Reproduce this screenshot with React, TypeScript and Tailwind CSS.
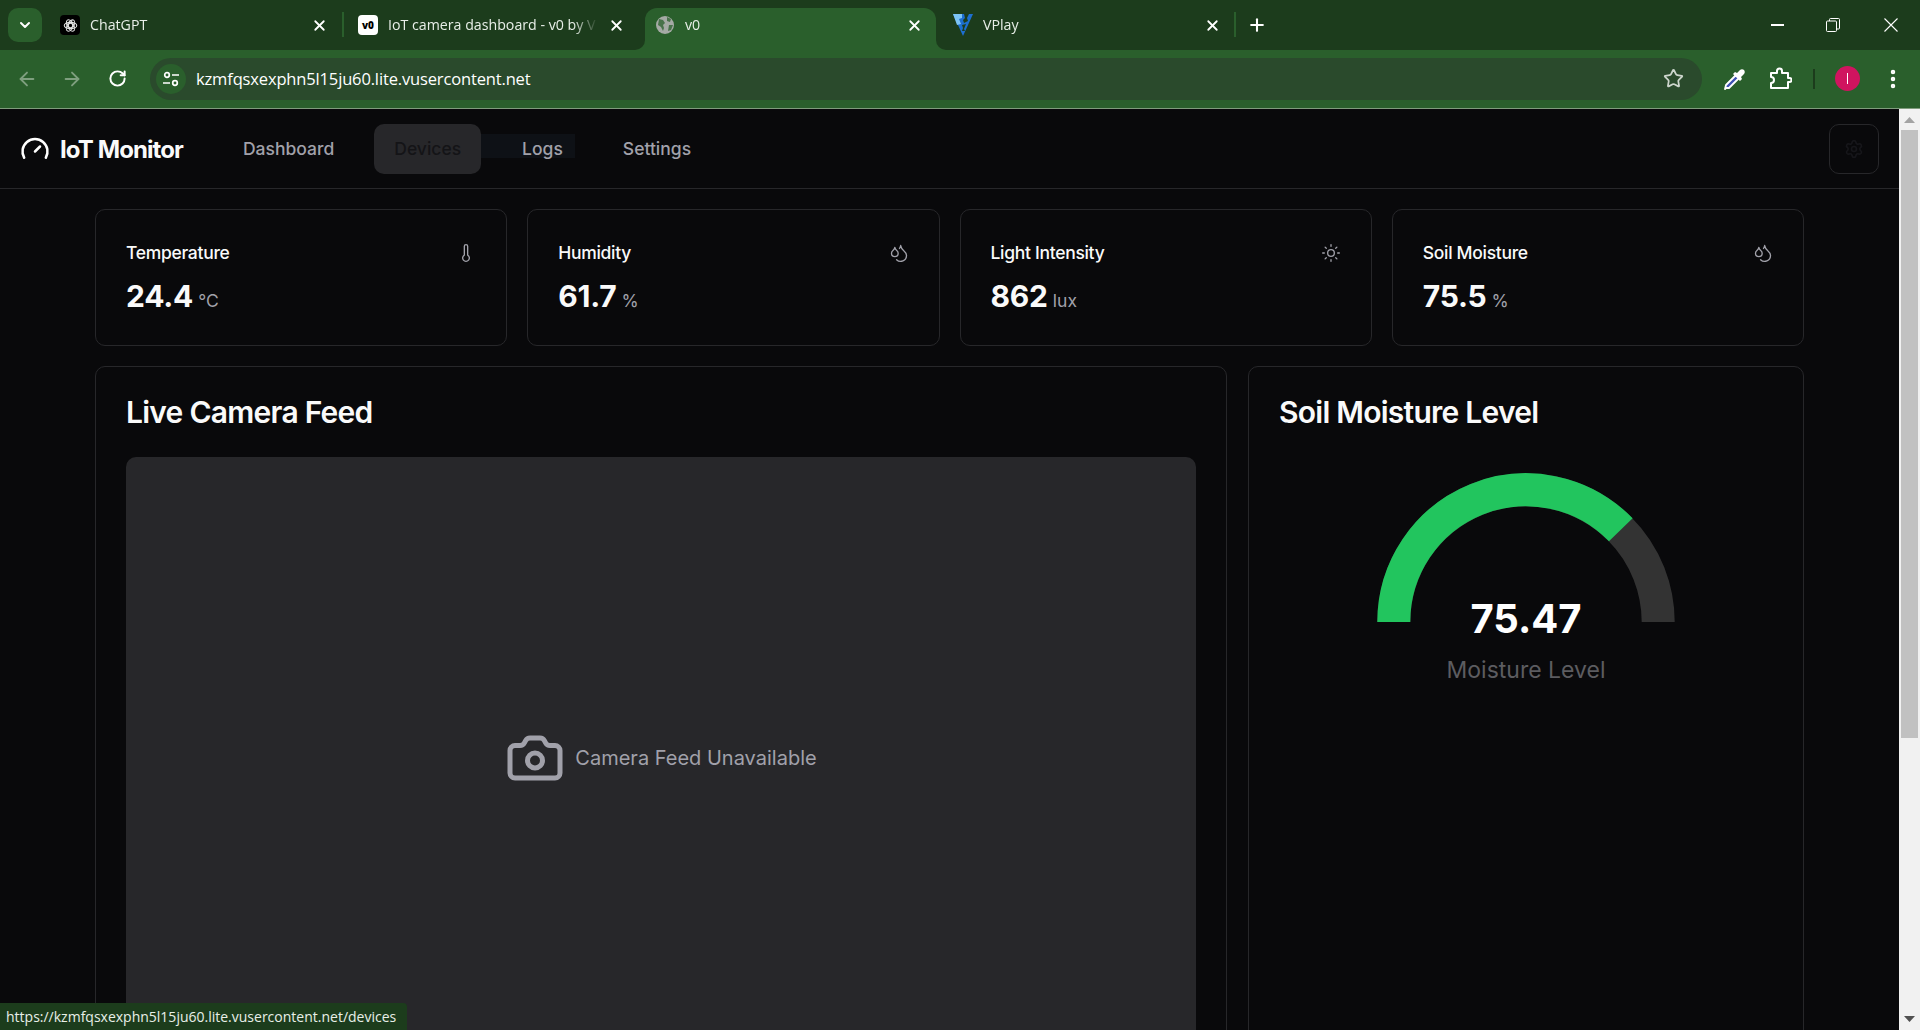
import { ArrowLeft, ArrowRight, Camera, ChevronDown, Droplets, EllipsisVertical, Gauge, Plus, RotateCw, Settings, Star, Sun, Thermometer, X } from "lucide-react";

const tabs = [
  { title: "ChatGPT", icon: "gpt", cls: "w-[296px] pl-3 pr-4" },
  { title: "IoT camera dashboard - v0 by V", icon: "v0", cls: "w-[301px] pl-[14px] pr-5" },
  { title: "v0", icon: "globe", cls: "w-[291px] pl-[10px] pr-[13px]", active: true },
  { title: "VPlay", icon: "vplay", cls: "w-[300px] pl-[17px] pr-[15px]" },
];

const stats = [
  { label: "Temperature", value: "24.4", unit: "°C", icon: Thermometer },
  { label: "Humidity", value: "61.7", unit: "%", icon: Droplets },
  { label: "Light Intensity", value: "862", unit: "lux", icon: Sun },
  { label: "Soil Moisture", value: "75.5", unit: "%", icon: Droplets },
];

function TabIcon({ kind }: { kind: string }) {
  if (kind === "gpt") {
    return (
      <span className="flex h-5 w-5 shrink-0 items-center justify-center rounded-[4px] bg-black">
        <svg width="15" height="15" viewBox="0 0 24 24" fill="none" stroke="#e5e5e5" strokeWidth="1.7">
          <circle cx="12" cy="12" r="3.5" />
          <ellipse cx="12" cy="12" rx="10" ry="5" />
          <ellipse cx="12" cy="12" rx="10" ry="5" transform="rotate(60 12 12)" />
          <ellipse cx="12" cy="12" rx="10" ry="5" transform="rotate(120 12 12)" />
        </svg>
      </span>
    );
  }
  if (kind === "v0") {
    return (
      <span className="flex h-5 w-5 shrink-0 items-center justify-center rounded-[4px] bg-white text-[10px] leading-none font-black text-black">
        v0
      </span>
    );
  }
  if (kind === "globe") {
    return (
      <svg className="shrink-0" width="20" height="20" viewBox="0 0 20 20">
        <circle cx="10" cy="10" r="9" fill="#a5aaa5" />
        <path d="M4 4l4 1 2 3-2 2 1 3-1 3-2-4-3-2zM12 2l4 2-1 3-3-1zM14 10l4 0-2 5-3 1z" fill="#2a5f2c" opacity="0.75" />
      </svg>
    );
  }
  return (
    <svg className="shrink-0" width="20" height="24" viewBox="0 0 20 24">
      <path d="M0 1l20 0-10 22z" fill="#1d6fd0" />
      <path d="M0 1l9 0 0 4-3 1 2 5-4 1z" fill="#7cc4f5" />
      <path d="M11 1l5 0-2 4 1 3-4 2-1-3 2-2z" fill="#1c3c1c" />
      <path d="M9 12l4-1-2 5 1 2-3 0 1-3z" fill="#1c3c1c" />
    </svg>
  );
}

function BrowserChrome() {
  return (
    <div className="shrink-0 font-['Open_Sans',sans-serif]">
      {/* Tab strip */}
      <div className="flex h-[50px] items-end bg-[#1c3c1c] text-white">
        <div className="mb-2 ml-2 flex h-[34px] w-[34px] items-center justify-center rounded-[10px] bg-[#2a5f2c]">
          <ChevronDown size={16} strokeWidth={3} />
        </div>
        <div className="ml-[6px] flex">
          {tabs.map((tab) => (
            <div
              key={tab.title}
              className={`relative flex h-[42px] items-center gap-[10px] rounded-t-[12px] pb-[8px] text-[14.2px] ${tab.cls} ${tab.active ? "bg-[#2a5f2c]" : ""}`}
            >
              <TabIcon kind={tab.icon} />
              <span className="min-w-0 flex-1 whitespace-nowrap text-[#e8efe8] [mask-image:linear-gradient(to_right,black_88%,transparent)]">
                {tab.title}
              </span>
              <X className="shrink-0" size={17} strokeWidth={2.5} />
              {tab.active && (
                <>
                  <span className="absolute bottom-0 -left-[10px] h-[10px] w-[10px] bg-[#2a5f2c]">
                    <span className="block h-full w-full rounded-br-[10px] bg-[#1c3c1c]" />
                  </span>
                  <span className="absolute -right-[10px] bottom-0 h-[10px] w-[10px] bg-[#2a5f2c]">
                    <span className="block h-full w-full rounded-bl-[10px] bg-[#1c3c1c]" />
                  </span>
                </>
              )}
              {(tab.icon === "gpt" || tab.icon === "vplay") && (
                <span className="absolute top-[4px] right-0 bottom-[13px] w-[2px] bg-[#2a5f2c]" />
              )}
            </div>
          ))}
        </div>
        <div className="mb-2 ml-[11px] flex h-[34px] items-center">
          <Plus size={20} strokeWidth={2.5} />
        </div>
        <div className="mb-[18px] ml-auto flex items-center gap-[42px] pr-[22px]">
          <span className="h-[1.5px] w-[13px] bg-white" />
          <svg width="14" height="14" viewBox="0 0 14 14" fill="none" stroke="white" strokeWidth="1">
            <rect x="0.5" y="3" width="10" height="10.5" rx="1" />
            <path d="M3.5 3V1.5a1 1 0 0 1 1-1h8a1 1 0 0 1 1 1V10a1 1 0 0 1-1 1h-2" />
          </svg>
          <svg className="ml-[2px]" width="14" height="14" viewBox="0 0 14 14" stroke="white" strokeWidth="1.1">
            <path d="M0.5 0.5l13 13M13.5 0.5l-13 13" />
          </svg>
        </div>
      </div>

      {/* Toolbar */}
      <div className="flex h-[59px] items-center border-b border-[#7f9c7c] bg-[#2a5f2c] pb-px text-[#dfe8df]">
        <ArrowLeft className="ml-[16px] text-[#7f9f7f]" size={22} strokeWidth={2} />
        <ArrowRight className="ml-[23px] text-[#7f9f7f]" size={22} strokeWidth={2} />
        <RotateCw className="ml-[25px] text-white" size={19} strokeWidth={2.5} />
        <div className="ml-[23px] flex h-[42px] w-[1552px] items-center rounded-full bg-[#2a4a2c] pr-[18px] pl-[6px]">
          <span className="flex h-[30px] w-[30px] items-center justify-center rounded-full bg-[#2a5f2c]">
            <svg width="18" height="18" viewBox="0 0 18 18" fill="none" stroke="white" strokeWidth="1.7">
              <circle cx="5" cy="5" r="2.3" />
              <path d="M10 5h7M1 13h7" />
              <circle cx="13" cy="13" r="2.3" />
            </svg>
          </span>
          <span className="ml-[10px] pt-[2px] text-[16.5px] tracking-[-0.15px] text-white">kzmfqsxexphn5l15ju60.lite.vusercontent.net</span>
          <Star className="ml-auto text-[#cdd6cd]" size={21} strokeWidth={2} />
        </div>
        <svg className="ml-[21px]" width="24" height="24" viewBox="0 0 24 24">
          <path d="M3 21l-1 1 1-4L13 8l3 3L6 21z" fill="#3f51b5" stroke="white" strokeWidth="1.8" strokeLinejoin="round" />
          <path d="M12 5l2 1 3-3c1-1 3-1 4 0s1 3 0 4l-3 3 1 2-2 2-7-7z" fill="white" />
        </svg>
        <svg className="ml-[21px]" width="24" height="24" viewBox="0 0 24 24" fill="none" stroke="white" strokeWidth="2" strokeLinejoin="round">
          <path d="M3 6h6V4a2.5 2.5 0 0 1 5 0v2h6v5h1.5a2 2 0 0 1 0 4H20v6H3v-5c2 0 3-1 3-3s-1-3-3-3z" />
        </svg>
        <span className="ml-[21px] h-[20px] w-[2px] bg-[#1c3c1c]" />
        <span className="ml-[20px] flex h-[25px] w-[25px] items-center justify-center rounded-full bg-[#d0145f]">
          <span className="h-[11px] w-px bg-white" />
        </span>
        <EllipsisVertical className="ml-[21px] text-white" size={24} strokeWidth={2.5} />
      </div>
    </div>
  );
}

function Header() {
  return (
    <header className="relative flex h-[80px] shrink-0 items-center border-b border-[#27272a] pr-[20px] pl-[20px]">
      <Gauge className="text-white" size={30} strokeWidth={2} />
      <span className="ml-[10px] pt-[2px] text-[24px] leading-none font-bold tracking-[-0.9px] text-[#fafafa]">IoT Monitor</span>
      <nav className="relative ml-[40px] flex items-center text-[17.5px] font-medium text-[#a1a1aa]">
        <span className="absolute top-[10px] left-[222px] h-[24px] w-[130px] bg-[#0e1116]" />
        <a className="relative flex h-[50px] items-center px-5 pt-[2px]">Dashboard</a>
        <a className="relative ml-[20px] flex h-[50px] items-center rounded-[10px] bg-[#27272a] px-5 pt-[2px] text-[#141417]">Devices</a>
        <a className="relative flex h-[50px] items-center px-5 pt-[2px] pl-[41px]">Logs</a>
        <a className="relative flex h-[50px] items-center pt-[2px] pl-[40px]">Settings</a>
      </nav>
      <button className="ml-auto flex h-[50px] w-[50px] items-center justify-center rounded-[10px] border border-[#27272a]">
        <Settings className="text-[#16161a]" size={20} />
      </button>
    </header>
  );
}

function StatCard({ label, value, unit, icon: Icon }: (typeof stats)[number]) {
  return (
    <div className="h-[137px] rounded-[10px] border border-[#27272a] px-[30px] pt-[31px]">
      <div className="flex h-[25px] items-center justify-between">
        <span className="text-[17.5px] font-medium tracking-[-0.3px] text-[#fafafa]">{label}</span>
        <Icon className="-mt-[2px] text-[#a1a1aa]" size={20} strokeWidth={1.6} />
      </div>
      <div className="mt-[12px] flex items-baseline">
        <span className="text-[30px] leading-[36px] font-bold tracking-[-0.2px] text-[#fafafa]">{value}</span>
        <span className="ml-[5px] text-[17.5px] text-[#a1a1aa]">{unit}</span>
      </div>
    </div>
  );
}

function MoistureGauge() {
  return (
    <svg className="mx-auto mt-[45px] block" width="300" height="220" viewBox="0 0 300 220">
      <path d="M17.8 150a132.2 132.2 0 0 1 264.4 0" fill="none" stroke="#333333" strokeWidth="33" />
      <path d="M17.8 150a132.2 132.2 0 0 1 227 -92.2" fill="none" stroke="#22c55e" strokeWidth="33" />
      <text x="150" y="161" textAnchor="middle" fill="#ffffff" fontSize="40" fontWeight="700">
        75.47
      </text>
      <text x="150" y="206" textAnchor="middle" fill="#5c5c60" fontSize="23">
        Moisture Level
      </text>
    </svg>
  );
}

function Scrollbar() {
  return (
    <div className="flex w-[21px] shrink-0 flex-col items-center bg-[#f1f1f1]">
      <svg className="mt-[8px]" width="11" height="6" viewBox="0 0 11 6">
        <path d="M5.5 0L11 6H0z" fill="#a3a3a3" />
      </svg>
      <div className="mt-[7px] h-[608px] w-[17px] bg-[#c1c1c1]" />
      <svg className="mt-auto mb-[8px]" width="11" height="6" viewBox="0 0 11 6">
        <path d="M5.5 6L11 0H0z" fill="#505050" />
      </svg>
    </div>
  );
}

export default function App() {
  return (
    <div className="relative flex h-[1030px] flex-col overflow-hidden bg-[#09090b] font-['Inter',sans-serif]">
      <BrowserChrome />
      <div className="flex min-h-0 flex-1">
        <div className="flex min-w-0 flex-1 flex-col">
          <Header />
          <main className="flex flex-col gap-[20px] px-[95px] pt-[20px]">
            <div className="grid grid-cols-4 gap-[20px]">
              {stats.map((stat) => (
                <StatCard key={stat.label} {...stat} />
              ))}
            </div>
            <div className="grid grid-cols-[1132px_556px] gap-[21px]">
              <section className="h-[900px] rounded-[10px] border border-[#27272a] p-[30px]">
                <h2 className="text-[30px] leading-[30px] font-semibold tracking-[-0.75px] text-[#fafafa]">Live Camera Feed</h2>
                <div className="mt-[30px] flex aspect-video items-center justify-center gap-[10px] rounded-[10px] bg-[#27272a] text-[20px] text-[#a1a1aa]">
                  <Camera size={60} strokeWidth={2} />
                  <span>Camera Feed Unavailable</span>
                </div>
              </section>
              <section className="h-[900px] rounded-[10px] border border-[#27272a] p-[30px]">
                <h2 className="text-[30px] leading-[30px] font-semibold tracking-[-0.75px] text-[#fafafa]">Soil Moisture Level</h2>
                <MoistureGauge />
              </section>
            </div>
          </main>
        </div>
        <Scrollbar />
      </div>
      <div className="absolute bottom-0 left-0 flex h-[27px] w-[407px] items-center rounded-tr-[4px] bg-[#1c3c1c] pl-[6px] font-['Open_Sans',sans-serif] text-[14px] whitespace-nowrap text-[#e8efe8]">
        https://kzmfqsxexphn5l15ju60.lite.vusercontent.net/devices
      </div>
    </div>
  );
}
